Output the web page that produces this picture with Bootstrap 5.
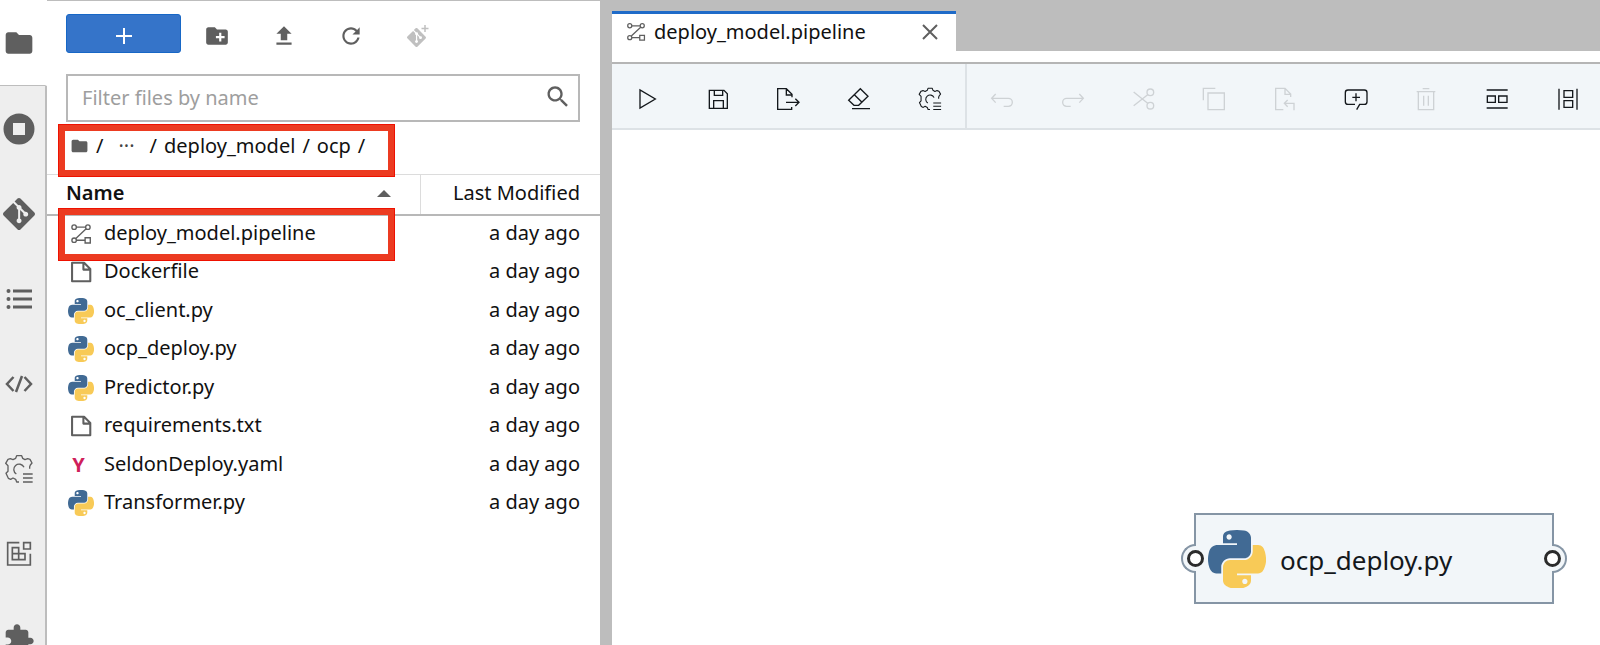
<!DOCTYPE html>
<html lang="en">
<head>
<meta charset="utf-8">
<meta name="viewport" content="width=device-width, initial-scale=1">
<title>deploy_model.pipeline</title>
<link href="https://cdn.jsdelivr.net/npm/bootstrap@5.3.0/dist/css/bootstrap.min.css" rel="stylesheet">
<style>
body { font-family: "Noto Sans", "Open Sans", sans-serif; font-size: 20px; line-height: 28px; color: #111; background: #bdbdbd; }
svg { display: block; flex: none; }
.ln { fill: none; stroke: currentColor; stroke-width: 4; }
.ic { border: 0; padding: 0; background: none; color: #5f5f5f; display: flex; align-items: center; justify-content: center; }
.ic:disabled { color: #c0c0c0; }

/* activity rail */
.rail { width: 47px; background: #eee; flex: none; overflow: hidden; }
.rail .ic { height: 85px; flex: none; padding-right: 7px; border-right: 2px solid #bdbdbd; }
.rail .ic.current { height: 86px; background: #fff; border-right-color: #fff; border-bottom: 1px solid #bdbdbd; }
.rail .ln { stroke-width: 5; }
.rail-rest { border-right: 2px solid #bdbdbd; }

/* file browser */
.browser { width: 553px; background: #fff; flex: none; border-top: 1px solid #bdbdbd; }
.tools { padding: 13px 20px 0 19px; gap: 1px; }
.tools .ic { width: 66px; height: 40px; padding-top: 4px; }
.tools .new-btn { width: 115px; height: 39px; background: #3574c9; border: 1px solid #1767c6; border-radius: 3px; color: #fff; margin-right: 2px; }
.filter { margin: 20px 20px 0 19px; height: 48px; border: 2px solid #b8b8b8; padding: 0 6px 0 14px; color: #5f5f5f; }
.filter input { border: 0; outline: 0; background: none; min-width: 0; color: #111; }
.filter input::placeholder { color: #9e9e9e; opacity: 1; }
.crumbs { height: 52px; padding: 10px 0 0 23px; gap: 7px; position: relative; align-items: flex-start; }
.crumbs a { color: inherit; text-decoration: none; }
.crumbs .home { color: #5f5f5f; }
.crumbs .dots { padding: 0 8px; color: #444; }
.mark-box { position: absolute; left: 11px; width: 337px; height: 53px; border: 7px solid #ec3b21; outline: 1px solid #ee1100; outline-offset: -1px; pointer-events: none; }
.crumbs .mark-box { top: 2px; }
.files { border-collapse: collapse; table-layout: fixed; }
.files th { height: 40px; border-top: 1px solid #dcdcdc; border-bottom: 2px solid #b8b8b8; padding: 0 0 2px 19px; font-weight: 600; }
.files th.modified { width: 180px; border-left: 1px solid #dcdcdc; font-weight: 400; padding: 0 20px 2px 0; }
.files .caret { margin-right: 29px; border: 7px solid transparent; border-top: 0; border-bottom: 7px solid #5f5f5f; }
.files td { height: 38px; padding: 0 0 3px; }
.files tbody tr:nth-child(odd) td { height: 39px; }
.files td:first-child { padding-left: 20px; position: relative; }
.files td:last-child { padding-right: 20px; text-align: right; }
.files td .mark-box { top: -8px; }
.fic { width: 28px; display: flex; justify-content: center; color: #5f5f5f; margin-right: 9px; padding-top: 2px; }
.yaml { color: #cf1f5b; font-weight: 700; line-height: 24px; padding-right: 5px; }

/* editor */
.gutter { width: 12px; flex: none; }
.editor { min-width: 0; }
.tabs { height: 51px; padding-top: 11px; }
.doc-tab { width: 344px; background: #fff; border-top: 3px solid #1f6bc8; padding: 0 14px 2px; color: #5f5f5f; }
.doc-tab a { color: #111; text-decoration: none; margin-left: 8px; }
.under-tabs { height: 13px; background: #fff; border-bottom: 2px solid #b5b5b5; }
.toolbar { height: 66px; background: #f2f6f9; border-bottom: 2px solid #dde2e6; }
.toolbar .ic { flex: 1; color: #14181c; padding-top: 6px; }
.toolbar .ic:disabled { color: #ced2d5; }
.toolbar .run { width: 355px; border-right: 2px solid #dde2e6; }
.toolbar .edit { margin-right: -3px; }
.canvas { background: #fff; position: relative; }
.node { position: absolute; left: 582px; top: 383px; width: 360px; height: 91px; background: #f2f6f9; border: 2px solid #8595a5; font-size: 26px; color: #14181c; padding-left: 12px; }
.node .label { margin-left: 14px; padding-top: 2px; }
.port { position: absolute; top: 29px; width: 15px; height: 29px; background: #f2f6f9; border: 2px solid #8595a5; }
.port::after { content: ""; position: absolute; top: 4px; width: 17px; height: 17px; border: 3px solid #2b2b2b; border-radius: 50%; background: #fff; }
.port.in { left: -15px; border-right: 0; border-radius: 15px 0 0 15px; }
.port.in::after { left: 4px; }
.port.out { right: -15px; border-left: 0; border-radius: 0 15px 15px 0; }
.port.out::after { right: 4px; }
</style>
</head>
<body class="vh-100 overflow-hidden">
<svg width="0" height="0" class="position-absolute" aria-hidden="true">
  <symbol id="folder" viewBox="0 0 24 24"><path fill="currentColor" d="M10 4H4c-1.1 0-1.99.9-1.99 2L2 18c0 1.1.9 2 2 2h16c1.1 0 2-.9 2-2V8c0-1.1-.9-2-2-2h-8l-2-2z"/></symbol>
  <symbol id="git" viewBox="0 0 24 24"><path fill="currentColor" d="M23.546 10.93L13.067.452c-.604-.603-1.582-.603-2.188 0L8.708 2.627l2.76 2.76c.645-.215 1.379-.07 1.889.441.516.515.658 1.258.438 1.9l2.658 2.66c.645-.223 1.387-.078 1.9.435.721.72.721 1.884 0 2.604-.719.719-1.881.719-2.6 0-.539-.541-.674-1.337-.404-1.996L12.86 8.955v6.525c.176.086.342.203.488.348.713.721.713 1.883 0 2.6-.719.721-1.889.721-2.609 0-.719-.719-.719-1.879 0-2.598.182-.18.387-.316.605-.406V8.835c-.217-.091-.424-.222-.6-.401-.545-.545-.676-1.342-.396-2.009L7.636 3.7.45 10.881c-.6.605-.6 1.584 0 2.189l10.48 10.477c.604.604 1.582.604 2.186 0l10.43-10.43c.605-.603.605-1.582 0-2.187"/></symbol>
  <symbol id="gear" viewBox="10 127 96 96"><path class="ln" stroke-linejoin="round" d="M90 174V168L92 163 97 157 91 146 84 144 76 147 69 143 66 135H51L48 143 40 147 32 144 25 146 18 158 25 165V182L19 188 26 203 33 206 40 202 48 206 51 214H58M73 170A16 16 0 1 0 50 190M70 190H99M70 202H99M70 214H99"/></symbol>
  <symbol id="pipe" viewBox="213 72 64 64"><g class="ln"><circle cx="225" cy="84" r="6.5"/><circle cx="265" cy="84" r="6.5"/><circle cx="225" cy="122" r="6.5"/><path d="M257 115H272V130H257ZM232 84H258M260 89L230 117M232 122H257"/></g></symbol>
  <symbol id="file" viewBox="213 186 64 64"><path fill="none" stroke="currentColor" stroke-width="6" stroke-linejoin="round" d="M219 191H254L272 209V245H219ZM252 191V211H272"/></symbol>
  <symbol id="py" viewBox="0 0 111 111"><path fill="#416a94" d="M54.919 0C50.335.02 45.958.41 42.106 1.095 30.76 3.1 28.7 7.295 28.7 15.032v10.219h26.813v3.406H18.638c-7.793 0-14.616 4.684-16.75 13.594-2.462 10.213-2.571 16.586 0 27.25 1.906 7.938 6.457 13.594 14.25 13.594h9.218v-12.25c0-8.85 7.657-16.656 16.75-16.656h26.781c7.455 0 13.407-6.139 13.407-13.625V15.032c0-7.266-6.13-12.724-13.407-13.937C64.282.328 59.502-.02 54.919 0zm-14.5 8.22c2.769 0 5.031 2.298 5.031 5.124 0 2.817-2.262 5.094-5.031 5.094-2.78 0-5.032-2.277-5.032-5.094 0-2.826 2.252-5.125 5.032-5.125z"/><path fill="#f8ca57" d="M85.638 28.657v11.906c0 9.231-7.826 17-16.75 17H42.106c-7.336 0-13.406 6.279-13.406 13.625v25.531c0 7.267 6.318 11.54 13.406 13.625 8.487 2.496 16.626 2.947 26.781 0 6.75-1.954 13.407-5.887 13.407-13.625V86.501H55.513v-3.406h40.187c7.793 0 10.697-5.436 13.407-13.594 2.799-8.399 2.68-16.476 0-27.25-1.926-7.757-5.604-13.594-13.407-13.594zM70.575 93.313c2.78 0 5.031 2.278 5.031 5.094 0 2.826-2.251 5.125-5.031 5.125-2.77 0-5.031-2.299-5.031-5.125 0-2.816 2.262-5.094 5.031-5.094z"/></symbol>
</svg>

<div class="d-flex h-100">
  <nav class="rail d-flex flex-column h-100" aria-label="Activity">
    <button class="ic current" aria-label="Files"><svg width="32" height="32"><use href="#folder"/></svg></button>
    <button class="ic" aria-label="Running"><svg width="32" height="32" viewBox="0 0 32 32"><path fill="currentColor" fill-rule="evenodd" d="M16 .5a15.500 15.500 0 1 0 0 31a15.500 15.500 0 1 0 0-31ZM10 10H22V22H10Z"/></svg></button>
    <button class="ic" aria-label="Git"><svg width="32" height="32"><use href="#git"/></svg></button>
    <button class="ic" aria-label="Contents"><svg width="26" height="22" viewBox="0 0 26 22"><g fill="currentColor"><circle cx="2.500" cy="3" r="2"/><circle cx="2.500" cy="11" r="2"/><circle cx="2.500" cy="19" r="2"/><path d="M7 1.500H26V4.500H7ZM7 9.500H26V12.500H7ZM7 17.500H26V20.500H7Z"/></g></svg></button>
    <button class="ic" aria-label="Snippets"><svg width="28" height="18" viewBox="0 0 28 18"><path fill="none" stroke="currentColor" stroke-width="2.500" d="M8.500 2L2 9L8.500 16M19.500 2L26 9L19.500 16M17 1L11 17"/></svg></button>
    <button class="ic" aria-label="Runtimes"><svg width="32" height="32"><use href="#gear"/></svg></button>
    <button class="ic" aria-label="Components"><svg width="32" height="32" viewBox="10 383 96 96"><path class="ln" d="M59 397H24V464H92V430M72 397H92V416H72ZM38 412H57V448H38ZM38 430H76V448H57V430"/></svg></button>
    <button class="ic" aria-label="Extensions"><svg width="32" height="32" viewBox="0 0 24 24"><path fill="currentColor" d="M20.500 11H19V7c0-1.100-.9-2-2-2h-4V3.500C13 2.120 11.880 1 10.500 1S8 2.120 8 3.500V5H4c-1.100 0-1.990.9-1.990 2v3.800H3.500c1.490 0 2.700 1.210 2.700 2.700s-1.210 2.700-2.700 2.700H2V20c0 1.100.9 2 2 2h3.800v-1.500c0-1.490 1.210-2.700 2.700-2.700 1.490 0 2.700 1.210 2.700 2.700V22H17c1.100 0 2-.9 2-2v-4h1.500c1.380 0 2.500-1.120 2.500-2.500S21.880 11 20.500 11z"/></svg></button>
    <div class="rail-rest flex-fill"></div>
  </nav>

  <section class="browser h-100" aria-label="File browser">
    <div class="tools d-flex">
      <button class="ic new-btn" aria-label="New launcher"><svg width="18" height="18" viewBox="0 0 18 18"><path d="M9 1V17M1 9H17" stroke="currentColor" stroke-width="2"/></svg></button>
      <button class="ic" aria-label="New folder"><svg width="26" height="26" viewBox="0 0 24 24"><path fill="currentColor" d="M20 6h-8l-2-2H4c-1.110 0-1.990.89-1.990 2L2 18c0 1.110.89 2 2 2h16c1.110 0 2-.89 2-2V8c0-1.110-.89-2-2-2zm-1 8h-3v3h-2v-3h-3v-2h3V9h2v3h3v2z"/></svg></button>
      <button class="ic" aria-label="Upload"><svg width="26" height="26" viewBox="0 0 24 24"><path fill="currentColor" d="M5 20h14v-2H5v2zm0-10h4v6h6v-6h4l-7-7-7 7z"/></svg></button>
      <button class="ic" aria-label="Refresh"><svg width="26" height="26" viewBox="0 0 18 18"><path fill="currentColor" d="M9 13.500c-2.490 0-4.500-2.010-4.500-4.500S6.510 4.500 9 4.500c1.240 0 2.360.52 3.170 1.330L10 8h5V3l-1.760 1.760C12.150 3.680 10.660 3 9 3 5.690 3 3.010 5.690 3.010 9S5.690 15 9 15c2.970 0 5.430-2.160 5.900-5h-1.520c-.46 2-2.240 3.500-4.380 3.500z"/></svg></button>
      <button class="ic" disabled aria-label="Clone repository"><svg width="22" height="22" viewBox="0 0 22 22"><use href="#git" x="0" y="3" width="19" height="19"/><path d="M18 0V7M14.500 3.500H21.500" stroke="currentColor" stroke-width="1.500"/></svg></button>
    </div>
    <div class="filter d-flex align-items-center">
      <input class="flex-fill p-0" type="text" placeholder="Filter files by name" aria-label="Filter files by name">
      <svg width="28" height="28" viewBox="0 0 24 24"><path fill="currentColor" d="M15.500 13h-.79l-.28-.27C15.410 11.590 16 10.110 16 8.500 16 4.910 13.090 2 9.500 2S3 4.910 3 8.500 5.910 15 9.500 15c1.610 0 3.090-.59 4.230-1.570l.27.28v.79l5 4.990L20.490 18l-4.990-5zm-6 0C7.010 13 5 10.990 5 8.500S7.010 4 9.500 4 14 6.010 14 8.500 11.990 13 9.500 13z"/></svg>
    </div>
    <div class="crumbs d-flex">
      <a href="#" class="home" aria-label="Home"><svg width="19" height="28"><use href="#folder"/></svg></a>
      <span>/</span><a href="#" class="dots">···</a><span>/</span><a href="#">deploy_model</a><span>/</span><a href="#">ocp</a><span>/</span>
      <div class="mark-box"></div>
    </div>
    <table class="files w-100">
      <thead><tr>
        <th><div class="d-flex align-items-center justify-content-between">Name<span class="caret"></span></div></th>
        <th class="modified text-end">Last Modified</th>
      </tr></thead>
      <tbody>
        <tr><td><div class="d-flex align-items-center"><span class="fic"><svg width="22" height="22"><use href="#pipe"/></svg></span>deploy_model.pipeline</div><div class="mark-box"></div></td><td>a day ago</td></tr>
        <tr><td><div class="d-flex align-items-center"><span class="fic"><svg width="22" height="22"><use href="#file"/></svg></span>Dockerfile</div></td><td>a day ago</td></tr>
        <tr><td><div class="d-flex align-items-center"><span class="fic"><svg width="26" height="26"><use href="#py"/></svg></span>oc_client.py</div></td><td>a day ago</td></tr>
        <tr><td><div class="d-flex align-items-center"><span class="fic"><svg width="26" height="26"><use href="#py"/></svg></span>ocp_deploy.py</div></td><td>a day ago</td></tr>
        <tr><td><div class="d-flex align-items-center"><span class="fic"><svg width="26" height="26"><use href="#py"/></svg></span>Predictor.py</div></td><td>a day ago</td></tr>
        <tr><td><div class="d-flex align-items-center"><span class="fic"><svg width="22" height="22"><use href="#file"/></svg></span>requirements.txt</div></td><td>a day ago</td></tr>
        <tr><td><div class="d-flex align-items-center"><span class="fic yaml">Y</span>SeldonDeploy.yaml</div></td><td>a day ago</td></tr>
        <tr><td><div class="d-flex align-items-center"><span class="fic"><svg width="26" height="26"><use href="#py"/></svg></span>Transformer.py</div></td><td>a day ago</td></tr>
      </tbody>
    </table>
  </section>

  <div class="gutter"></div>

  <main class="editor d-flex flex-column flex-fill h-100">
    <div class="tabs d-flex">
      <div class="doc-tab d-flex align-items-center">
        <svg width="20" height="20"><use href="#pipe"/></svg>
        <a href="#">deploy_model.pipeline</a>
        <button class="ic ms-auto" aria-label="Close tab"><svg width="24" height="24" viewBox="0 0 24 24"><path d="M5 5L19 19M19 5L5 19" stroke="currentColor" stroke-width="2"/></svg></button>
      </div>
    </div>
    <div class="under-tabs"></div>
    <div class="toolbar d-flex">
      <div class="run d-flex">
        <button class="ic" aria-label="Run"><svg width="24" height="24" viewBox="106 262 72 72"><path class="ln" d="M121 271V325L167 298Z"/></svg></button>
        <button class="ic" aria-label="Save"><svg width="24" height="24" viewBox="318 262 72 72"><path class="ln" d="M328 272H372L382 282V326H328ZM343 272V287H368V272M341 326V303H370V326"/></svg></button>
        <button class="ic" aria-label="Export"><svg width="24" height="24" viewBox="530 262 72 72"><path class="ln" d="M577 322V329H535V267H561L578 284V293M561 267V286H578M560 308H598M588 297L599 308 588 319"/></svg></button>
        <button class="ic" aria-label="Clear"><svg width="24" height="24" viewBox="742 262 72 72"><path class="ln" d="M747 302L782 267 805 290 777 317H763ZM764 285L787 308M757 327H811"/></svg></button>
        <button class="ic" aria-label="Open runtimes"><svg width="26" height="26"><use href="#gear"/></svg></button>
      </div>
      <div class="edit d-flex flex-fill">
        <button class="ic" disabled aria-label="Undo"><svg width="24" height="24" viewBox="151 82 72 72"><path class="ln" d="M168 103L156 116 168 129M156 116H206a12 12 0 0 1 0 24H192"/></svg></button>
        <button class="ic" disabled aria-label="Redo"><svg width="24" height="24" viewBox="363 82 72 72"><path class="ln" d="M418 103L430 116 418 129M430 116H380a12 12 0 0 0 0 24H392"/></svg></button>
        <button class="ic" disabled aria-label="Cut"><svg width="24" height="24" viewBox="575 82 72 72"><g class="ln"><circle cx="630" cy="98" r="10"/><circle cx="630" cy="138" r="10"/><path d="M580 97L622 131M580 138L622 105"/></g></svg></button>
        <button class="ic" disabled aria-label="Copy"><svg width="24" height="24" viewBox="787 82 72 72"><path class="ln" d="M805 100H854V150H805ZM791 122V86H827"/></svg></button>
        <button class="ic" disabled aria-label="Paste"><svg width="24" height="24" viewBox="38 82 72 72"><path class="ln" d="M69 150H46V86H74L91 103V112M74 86V104H91M101 152V131H73M82 121L72 131 82 141"/></svg></button>
        <button class="ic" aria-label="Add comment"><svg width="24" height="24" viewBox="250 82 72 72"><path class="ln" d="M288 150L297 134H311a8 8 0 0 0 8-8V99a8 8 0 0 0-8-8H262a8 8 0 0 0-8 8V126a8 8 0 0 0 8 8H283M275 113H298M286 101V125"/></svg></button>
        <button class="ic" disabled aria-label="Delete"><svg width="24" height="24" viewBox="462 82 72 72"><path class="ln" d="M470 96H526M488 87H508M475 96V150H521V96M491 108V138M505 108V138"/></svg></button>
        <button class="ic" aria-label="Arrange horizontally"><svg width="24" height="24" viewBox="673 82 72 72"><path class="ln" d="M678 91H741M678 145H741M680 109H704V128H680ZM714 109H739V128H714Z"/></svg></button>
        <button class="ic" aria-label="Arrange vertically"><svg width="24" height="24" viewBox="885 82 72 72"><path class="ln" d="M894 87V150M948 87V150M909 93H935V113H909ZM909 123H935V143H909Z"/></svg></button>
      </div>
    </div>
    <div class="canvas flex-fill">
      <div class="node d-flex align-items-center">
        <span class="port in"></span>
        <svg width="58" height="58"><use href="#py"/></svg>
        <span class="label">ocp_deploy.py</span>
        <span class="port out"></span>
      </div>
    </div>
  </main>
</div>
<script src="https://cdn.jsdelivr.net/npm/bootstrap@5.3.0/dist/js/bootstrap.bundle.min.js"></script>
</body>
</html>
